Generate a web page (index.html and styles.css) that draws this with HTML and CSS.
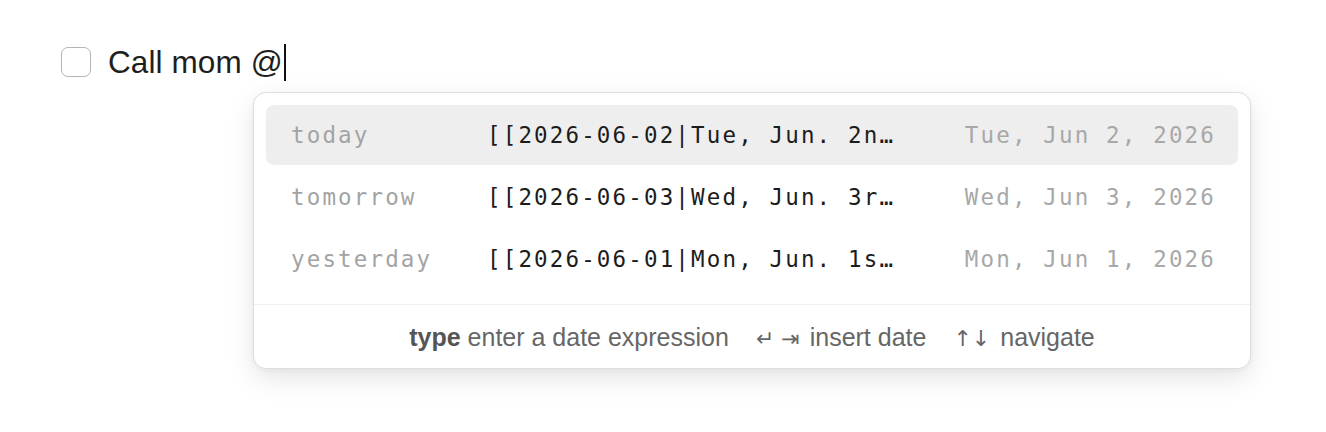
FILE: index.html
```html
<!DOCTYPE html>
<html lang="en">
<head>
<meta charset="utf-8">
<title>Date picker</title>
<link rel="stylesheet" href="styles.css">
</head>
<body>
<div class="editor">
  <div class="task">
    <span class="checkbox"></span>
    <span class="task-text">Call mom @</span><span class="caret"></span>
  </div>
  <div class="popup">
    <div class="rows">
      <div class="row active">
        <span class="label">today</span>
        <span class="value">[[2026-06-02|Tue, Jun. 2nd, 2026]]</span>
        <span class="date">Tue, Jun 2, 2026</span>
      </div>
      <div class="row">
        <span class="label">tomorrow</span>
        <span class="value">[[2026-06-03|Wed, Jun. 3rd, 2026]]</span>
        <span class="date">Wed, Jun 3, 2026</span>
      </div>
      <div class="row">
        <span class="label">yesterday</span>
        <span class="value">[[2026-06-01|Mon, Jun. 1st, 2026]]</span>
        <span class="date">Mon, Jun 1, 2026</span>
      </div>
    </div>
    <div class="footer">
      <span class="hint"><b>type</b> enter a date expression</span>
      <span class="hint"><span class="keys">↵ ⇥</span> insert date</span>
      <span class="hint"><span class="keys">↑↓</span> navigate</span>
    </div>
  </div>
</div>
</body>
</html>
```
FILE: styles.css
```css
html, body {
  margin: 0;
  padding: 0;
  background: #ffffff;
}
body {
  font-family: "Liberation Sans", Arial, sans-serif;
  color: #1f1f1f;
}
.editor {
  position: relative;
  padding: 46px 0 0 61px;
  height: 386px;
}
.task {
  display: flex;
  align-items: center;
  height: 33px;
}
.checkbox {
  width: 28px;
  height: 28px;
  border: 1.6px solid #b4b4b4;
  border-radius: 7px;
  box-sizing: content-box;
  margin-right: 17px;
  flex: none;
  position: relative;
  top: -1px;
}
.task-text {
  font-size: 31.5px;
  line-height: 33px;
  color: #1e1e1e;
  letter-spacing: 0.1px;
}
.caret {
  width: 2px;
  height: 37px;
  background: #111;
  margin-left: 1px;
}
.popup {
  position: absolute;
  left: 253px;
  top: 92px;
  width: 998px;
  height: 277px;
  box-sizing: border-box;
  border: 1px solid #dedede;
  border-radius: 13px;
  background: #fff;
  box-shadow: 0 10px 28px rgba(0, 0, 0, 0.10), 0 2px 6px rgba(0, 0, 0, 0.04);
  display: flex;
  flex-direction: column;
}
.rows {
  padding: 12px 12px 0 12px;
  display: flex;
  flex-direction: column;
  gap: 2px;
  height: 212px;
  box-sizing: border-box;
  border-bottom: 1px solid #efefef;
}
.row {
  display: grid;
  grid-template-columns: 196px 420px 1fr;
  align-items: center;
  height: 60px;
  padding: 0 22px 0 25px;
  border-radius: 8px;
  font-family: "DejaVu Sans Mono", "Liberation Mono", monospace;
  font-size: 22.5px;
  letter-spacing: 2.15px;
}
.row.active {
  background: #eeeeee;
}
.label {
  color: #a3a3a3;
}
.value {
  color: #1c1c1c;
  white-space: nowrap;
  overflow: hidden;
  text-overflow: ellipsis;
  min-width: 0;
}
.date {
  color: #a8a8a8;
  justify-self: end;
  white-space: nowrap;
  padding-left: 4px;
}
.footer {
  flex: 1;
  display: flex;
  justify-content: center;
  align-items: center;
  gap: 27px;
  font-size: 25px;
  color: #666666;
  padding-top: 2px;
}
.hint b {
  color: #555;
  font-weight: 700;
}
.keys {
  font-family: "DejaVu Sans", sans-serif;
  font-size: 22px;
  margin-right: 3px;
}
```
